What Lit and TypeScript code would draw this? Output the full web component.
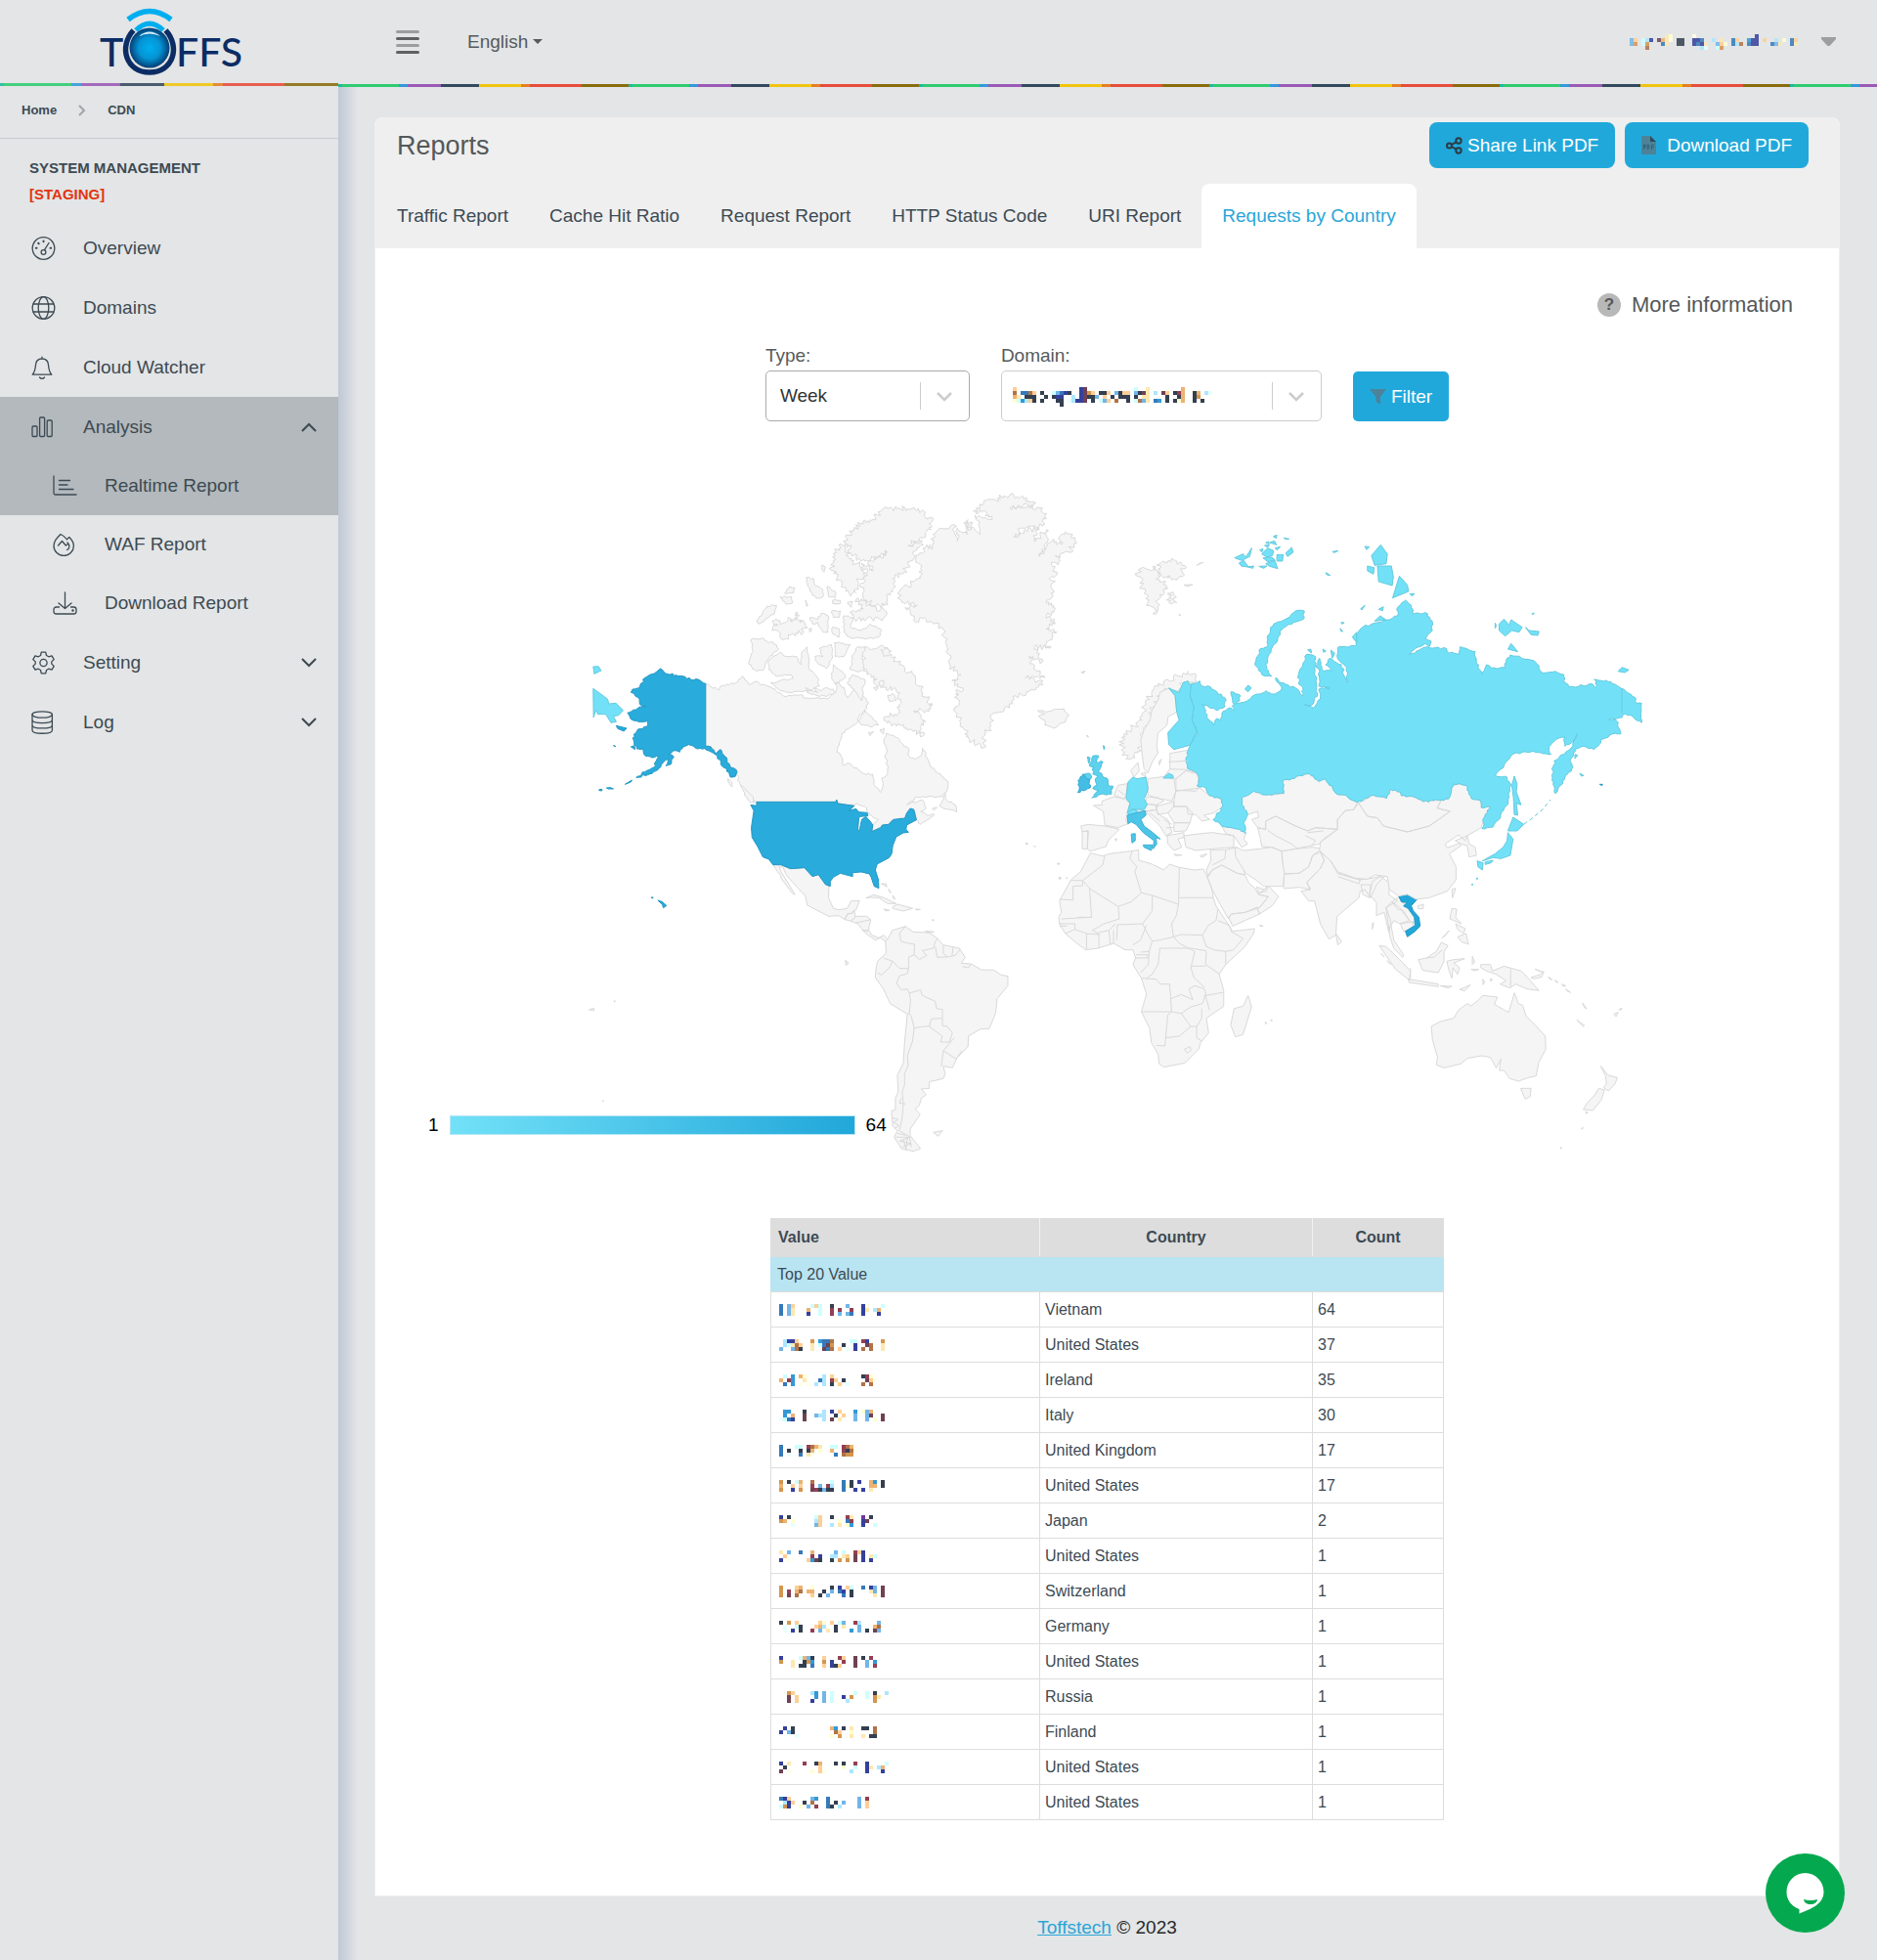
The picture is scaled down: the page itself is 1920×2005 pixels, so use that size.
import { LitElement, html, css, svg, nothing } from "lit";
import type { SVGTemplateResult } from "lit";
import { customElement, property, state } from "lit/decorators.js";
import { classMap } from "lit/directives/class-map.js";

/* ---------- Masked values: small colour mosaics ---------- */

const TONES: Record<string, string> = {
  n: "#35409c", b: "#3579b9", s: "#72b5e8", l: "#aee6ff", c: "#cdffff", h: "#e8ffff",
  w: "#933f53", m: "#6f4153", o: "#d3964f", t: "#edb272", p: "#ffcf96", y: "#ffe8b0",
  v: "#ffffd0", k: "#343f50", d: "#b07347", a: "#3399d6", e: "#ffffe8", u: "#6d3b9c",
};

@customElement("masked-value")
export class MaskedValue extends LitElement {
  @property({ attribute: false }) rows: string[] = [];

  static styles = css`
    :host { display: inline-flex; }
    svg { display: block; shape-rendering: crispEdges; }
  `;

  render() {
    const columns = Math.max(...this.rows.map((r) => r.length));
    const cells: SVGTemplateResult[] = [];
    this.rows.forEach((row, y) =>
      [...row].forEach((tone, x) => {
        if (TONES[tone]) cells.push(svg`<rect x=${x} y=${y} width="1" height="1" fill=${TONES[tone]}></rect>`);
      })
    );
    return html`<svg aria-hidden="true" width=${columns * 4} height=${this.rows.length * 4}
      viewBox="0 0 ${columns} ${this.rows.length}">${cells}</svg>`;
  }
}

/* ---------- World map ---------- */

interface Layer {
  frame: string;
  shapes: { tone: string; polys: string; rough?: number }[];
  borders?: string;
}

const AMERICAS: Layer = {
  frame: "translate(590 490) scale(.35714 .33333)",
  shapes: [
    { tone: "land", rough: 1, polys:
      "369,628 408,648 412,636 455,626 475,605 493,630 510,622 560,642 575,655 600,668 640,662 655,672 715,674 740,655 745,625 765,640 775,670 790,650 800,645 822,668 835,690 825,708 808,730 800,752 776,768 760,780 745,838 757,850 762,878 780,873 822,904 848,906 850,938 870,962 877,940 874,918 890,905 892,885 883,850 888,830 880,810 885,782 920,795 935,815 950,828 952,852 970,860 985,850 990,825 1005,860 1015,885 1050,915 1063,930 1060,960 1040,975 975,976 945,1000 990,985 1000,1010 985,1020 1000,1030 1025,1030 985,1060 973,1046 965,1014 955,1011 945,1025 940,1041 907,1045 893,1060 875,1062 870,1070 845,1082 848,1062 865,1045 850,1040 838,1030 825,1005 800,995 795,1003 748,996 744,984 742,991 515,991 490,978 465,930 457,893 440,885 425,852 412,830 400,842 384,822 369,820" },
    { tone: "land", rough: 2, polys:
      "770,178 795,155 820,130 845,128 870,100 895,90 930,95 940,88 970,95 990,95 1018,130 1015,155 985,180 948,205 990,190 970,220 950,262 935,290 905,305 905,345 890,365 880,390 850,390 820,360 815,320 830,290 815,260 850,280 835,255 870,240 890,225 865,235 830,250 800,240 775,220 785,210 770,195|" +
      "755,200 770,215 780,245 810,265 828,290 805,315 800,350 780,352 760,325 755,310 735,290 730,260 740,220|" +
      "782,410 820,400 800,370 815,368 830,390 880,402 880,425 830,430 790,428|" +
      "560,435 600,440 605,425 618,438 630,408 638,440 655,445 650,468 620,475 600,490 560,465 575,450|" +
      "825,515 890,518 900,545 930,570 970,610 1000,670 1018,695 1000,710 965,712 1000,745 985,750 990,790 960,770 920,750 890,750 880,730 920,720 930,685 915,650 880,640 850,640 860,615 830,600 815,570|" +
      "1222,52 1275,52 1308,70 1308,82 1240,90 1285,85 1320,85 1346,120 1335,145 1275,150 1252,178 1285,155 1325,155 1310,190 1345,155 1350,185 1325,238 1360,190 1390,200 1385,175 1410,168 1428,190 1410,225 1370,235 1385,250 1360,265 1375,285 1360,300 1365,340 1345,380 1370,400 1345,420 1370,440 1345,460 1375,470 1345,500 1355,520 1310,515 1335,560 1295,545 1320,590 1340,610 1285,610 1335,620 1310,648 1255,665 1240,702 1190,722 1185,760 1165,790 1165,825 1125,800 1110,770 1085,715 1095,690 1085,660 1105,640 1075,620 1100,600 1070,575 1060,515 1045,455 1000,430 965,435 940,395 975,388 930,378 925,345 965,315 985,305 988,265 970,250 1000,210 1020,207 1020,170 1080,140 1090,190 1090,150 1118,170 1108,135 1130,155 1120,125 1155,170 1140,110 1190,125 1175,105 1135,100 1165,75 1200,65" },
    { tone: "land", rough: 1, polys:
      "500,492 530,488 550,503 562,500 578,520 550,550 540,568 535,585 515,590 492,568 505,530|" +
      "548,560 580,532 600,545 630,545 642,570 645,530 660,515 665,580 690,610 695,635 665,650 640,652 600,655 570,640 555,625 620,612 615,602 570,605 550,585|" +
      "695,520 730,508 733,545 715,582 688,562 682,545 705,545|738,502 783,508 765,545 740,545|735,570 760,590 770,610 740,630 730,610|" +
      "805,515 825,515 818,545 825,590 800,590 783,585 790,540|790,600 825,615 815,680 800,655 775,625|808,740 825,710 865,755 840,760 815,755|" +
      "515,435 545,390 572,388 565,415 540,430 525,445|595,350 610,330 625,335 622,348|582,362 615,362 618,380 600,385|" +
      "657,303 678,305 680,322 705,340 705,362 685,365 668,345|717,330 740,345 740,365 720,360|733,372 755,372 755,382 733,382|" +
      "668,425 690,430 700,412 720,420 720,470 705,470 690,440 675,445|732,455 752,460 752,485 733,475|730,405 755,405 752,425 735,425|" +
      "765,420 790,425 785,455 815,465 840,445 870,460 870,480 850,490 785,488 765,470|702,264 712,270 708,286|655,372 662,388 657,390|" +
      "655,640 690,655 680,640 700,650 715,640 735,645 742,655 720,665 690,665 660,655|835,778 850,775 840,788|868,770 880,765 878,782|" +
      "870,525 890,520 898,538 880,545|890,665 905,658 915,680 895,682|865,625 878,618 876,640|665,460 672,458 668,470|775,380 790,376 786,394|" +
      "1040,1005 1055,965 1060,985 1085,1000 1088,1022 1070,1015|1018,1012 1032,1008 1024,1016|470,940 500,970 512,995 490,985|432,920 444,930 444,945|" +
      "1320,710 1345,715 1365,708 1395,705 1410,725 1400,745 1365,765 1340,755 1340,740 1322,728 1340,722" },
    { tone: "land", polys:
      "562,1184 585,1184 612,1196 652,1193 675,1220 692,1214 712,1244 722,1250 721,1285 735,1318 750,1322 775,1318 785,1295 810,1294 800,1322 792,1325 790,1332 775,1335 768,1352 750,1340 722,1342 660,1308 655,1280 620,1240 600,1215 590,1190 580,1190 585,1205 625,1275 618,1272 585,1225 585,1218 575,1205|" +
      "768,1352 775,1335 790,1332 795,1325 798,1345 785,1357|785,1357 800,1342 830,1342 842,1352 835,1385 820,1385 805,1365|818,1385 838,1387 845,1400 865,1408 880,1400 890,1412 885,1420 870,1408 855,1415 835,1400|" +
      "828,1286 850,1276 880,1285 915,1303 890,1303 865,1285 840,1284|905,1312 920,1305 962,1318 935,1326 905,1318|880,1320 896,1324 884,1325|970,1320 984,1321 974,1323|" +
      "872,1242 886,1242 888,1252|893,1258 900,1270 896,1268|905,1278 912,1290 906,1286|1018,1352 1023,1354 1019,1356|770,1478 777,1486 772,1491|" +
      "1448,595 1456,589 1450,597|1286,1116 1293,1120 1287,1122|1310,1126 1314,1128 1310,1128|1378,1180 1383,1181 1378,1183|1382,1222 1388,1226 1382,1228|1462,787 1466,792 1463,792" },
    { tone: "us", rough: 1, polys:
      "239,582 258,598 275,597 277,604 298,604 334,617 350,616 369,628 369,820 384,822 400,842 412,830 425,852 440,885 457,893 455,912 440,915 430,890 415,880 410,862 396,845 366,827 340,826 320,815 305,822 295,838 275,835 262,845 278,852 270,875 255,880 262,860 250,868 235,888 210,905 170,916 200,895 220,885 235,850 215,855 197,850 190,828 172,828 160,795 175,768 200,760 203,742 190,745 160,740 145,718 178,700 197,698 180,690 175,670 155,655 160,645 180,640 195,610 222,597" },
    { tone: "us", polys:
      "138,937 158,924 155,930|64,953 72,952 72,957 64,956|85,948 97,947 105,951 90,951|113,757 143,765 135,774 117,766|105,818 110,819 110,822|155,822 165,818 167,830|" +
      "232,1293 244,1297 257,1309 248,1316 245,1306|213,1284 219,1284 217,1287|" +
      "515,991 742,991 744,984 748,996 795,1003 780,1018 800,1012 808,1022 832,1024 834,1034 812,1036 808,1040 805,1078 810,1078 816,1045 828,1036 840,1050 848,1062 845,1082 870,1070 875,1062 893,1060 907,1045 940,1041 945,1025 955,1011 965,1014 973,1046 945,1062 943,1075 950,1084 935,1086 915,1098 905,1125 902,1150 895,1162 860,1182 855,1200 864,1230 865,1256 852,1250 843,1222 838,1212 815,1206 790,1208 790,1220 755,1210 735,1222 726,1235 726,1250 712,1244 692,1214 675,1220 652,1193 612,1196 585,1184 562,1184 550,1167 533,1160 518,1128 502,1100 500,1070 507,1018 498,1000 515,1003" },
    { tone: "low", polys: "47,643 88,675 92,690 112,688 133,710 120,725 105,728 113,745 98,748 83,722 60,722 55,708 48,732|47,576 62,575 70,588 50,598" },
    { tone: "uk", rough: 1, polys:
      "1478,850 1495,850 1488,868 1507,868 1495,895 1505,910 1522,925 1522,940 1535,942 1530,968 1500,968 1475,978 1495,955 1478,950 1490,940 1485,920 1493,912 1478,905 1480,885 1468,880 1475,865|1455,905 1470,904 1475,917 1465,923 1450,917|1462,853 1470,855 1466,873|1508,818 1512,822 1510,830" },
    { tone: "ireland", rough: 1, polys: "1450,905 1460,920 1470,922 1470,948 1435,962 1440,945 1436,925" },
  ],
  borders: "M800,1362L842,1352",
};

const SOUTH_AMERICA: Layer = {
  frame: "translate(420 880) scale(.40816 .33333)",
  shapes: [
    { tone: "land", polys:
      "1197,240 1207,215 1240,203 1260,220 1300,222 1320,240 1335,260 1375,270 1390,298 1380,316 1405,318 1430,336 1462,337 1480,352 1497,356 1497,385 1470,425 1466,470 1450,517 1428,518 1398,540 1397,572 1370,605 1358,637 1335,632 1340,655 1335,670 1300,680 1300,700 1280,702 1292,720 1280,730 1275,752 1265,764 1277,780 1252,825 1252,845 1278,885 1260,893 1230,885 1212,850 1220,830 1208,815 1205,770 1215,765 1215,730 1222,710 1220,660 1235,622 1238,560 1245,472 1202,440 1185,395 1165,360 1165,345 1170,310 1192,285 1190,250|" +
      "1310,835 1333,830 1322,847|1090,308 1098,316 1091,322|447,459 459,454 460,461|510,430 514,434 511,434|481,737 484,739 481,740|1290,217 1312,220 1296,222" },
  ],
  borders:
    "M1240,203L1225,225 1230,250 1263,258 1262,290 1248,298 1248,332 1225,332 1208,310 1185,300M1208,310L1200,330 1180,352 1170,345M1248,332L1245,348 1225,355 1218,378 1230,398 1245,395 1250,408 1278,398 1282,415 1315,433 1318,455 1333,458 1333,485 1305,487 1300,510 1285,510 1262,515 1255,480 1250,470 1253,430 1250,408M1300,510L1333,540 1328,558 1350,558 1358,530 1345,510 1333,508 1333,485M1262,515L1258,555 1245,600 1247,630 1238,655 1238,690 1232,710 1235,745 1232,790 1225,830 1250,848 1255,880M1362,545L1335,585 1330,632M1335,585L1368,610M1370,605l12,-20M1262,290L1275,305 1293,292 1283,277 1310,270 1315,250 1320,240M1315,265L1320,298 1345,297 1365,292 1378,272M1335,260L1335,285 1345,297M1360,265L1357,292M1245,472L1250,470M1405,318L1398,330 1383,326M1230,730L1225,745 1240,748M1208,790l14,6 -12,8 14,10 -12,10M1215,850L1252,850 1225,862 1255,870 1232,880M1220,838l20,6M1235,855l6,30M1245,852l-4,38",
};

const EURASIA: Layer = {
  frame: "translate(1060 530) scale(.40816 .33333)",
  shapes: [
    { tone: "land", rough: 2, polys:
      "240,735 225,740 215,700 218,665 240,645 265,620 275,570 290,530 320,500 355,485 380,470 400,490 388,510 380,500 368,505 358,535 332,522 310,535 305,560 290,590 285,620 270,650 265,700 255,720|" +
      "255,160 275,155 285,160 300,150 310,190 330,215 310,235 300,295 280,260 275,225 260,200|310,140 345,128 372,145 360,180 330,185 310,160|330,230 345,235 352,260 335,262" },
    { tone: "land", polys:
      "265,720 262,680 270,650 285,620 290,590 305,560 310,535 332,522 348,545 352,595 330,610 328,635 305,660 302,700 305,720 290,750 280,782 270,770|308,745 314,740 308,758|237,775 255,750 258,775 245,795|262,785 274,780 274,794|" +
      "402,145 418,136 410,138|370,205 392,204 380,210|113,473 121,470 115,476|127,666 129,670 127,670|358,294 362,298 359,300|" +
      "143,882 165,880 165,868 195,855 222,862 235,875 228,905 225,930 230,938 205,950 172,942 168,900|195,850 205,820 228,815 225,850 220,862|" +
      "112,945 130,940 172,945 208,955 180,990 175,1008 135,1022 128,1015 130,960 115,962|115,962 130,960 128,1015 115,1015|197,985 202,984 200,991|" +
      "280,800 320,793 345,800 350,840 340,868 305,860 280,850|275,855 305,858 320,868 300,882 275,875|300,885 345,870 345,885 330,905 305,910|240,893 270,893 278,878 305,880 300,895 275,900|" +
      "275,900 300,895 310,912 330,925 340,965 325,975 310,945 285,915|330,905 345,885 375,885 392,905 385,935 345,935|345,935 385,935 375,960 345,962|328,975 370,965 370,980 355,985 365,1010 345,1020 330,1000|" +
      "335,722 380,712 380,745 400,780 375,775 350,800 320,793 335,770|350,800 375,775 403,785 410,822 400,838 350,835|345,868 350,838 410,828 435,852 465,862 468,885 445,905 420,912 435,925 415,930 400,910 380,908 378,885 345,885|" +
      "370,975 400,970 440,965 470,970 495,975 495,1010 440,1015 400,1020 375,1010|465,945 510,955 525,968 520,985 530,1000 515,1010 495,975 475,968|345,1032 365,1034 350,1036|410,1037 428,1030 418,1041|" +
      "515,880 515,860 545,838 565,848 590,850 620,845 618,805 640,800 660,790 685,785 708,808 725,800 755,848 775,850 785,862 805,872 795,895 775,897 755,925 755,955 700,950 680,960 650,945 600,915 575,930 575,955 555,950 540,925 557,918 555,900 530,910|" +
      "555,950 575,955 575,930 600,915 650,945 680,960 700,950 755,955 720,985 710,1000 650,1015 615,1022 590,1010 565,1008 562,985|" +
      "808,875 830,915 855,920 870,945 930,963 985,945 1037,900 1005,890 1015,865 1033,862 1045,815 1078,820 1090,860 1112,865 1115,888 1138,885 1125,910 1115,950 1080,975 1075,990 1058,972 1025,1000 1030,1012 1060,998 1065,1005 1035,1030 1052,1070 1052,1110 1030,1145 985,1165 952,1170 930,1155 908,1160 885,1140 880,1100 850,1095 830,1108 800,1105 755,1085 740,1055 710,1020 712,995 755,955 755,925 775,897 795,895|" +
      "808,875 845,850 878,860 888,832 912,840 915,852 945,855 970,870 1015,865 1005,890 1037,900 985,945 930,963 870,945 855,920 830,915|" +
      "1050,990 1080,975 1085,1000 1100,1010 1103,1035 1085,1040 1080,1005 1065,1000|498,1010 520,1020 560,1015 590,1010 615,1022 617,1055 622,1090 618,1130 570,1130 550,1110 525,1090 500,1040" },
    { tone: "low", rough: 1, polys:
      "388,510 400,507 410,500 415,515 430,515 473,552 473,578 455,590 415,572 425,590 428,615 445,635 452,615 462,620 465,600 485,582 495,590 492,565 488,533 512,545 510,560 500,570 520,565 540,548 560,540 575,530 590,540 605,535 615,525 600,490 612,505 655,525 668,545 668,520 658,510 658,475 668,450 678,418 700,425 698,460 705,540 690,575 672,573 695,583 712,548 708,525 735,520 733,525 708,515 710,470 703,460 710,430 720,470 740,468 725,450 735,430 765,450 770,480 780,505 778,460 755,430 755,398 803,390 800,360 820,333 860,320 885,312 905,300 905,275 925,252 940,268 945,295 975,290 992,315 993,345 975,370 990,378 985,395 975,385 950,400 935,420 960,405 980,395 1000,398 1028,400 1030,410 1060,418 1062,395 1078,400 1085,405 1100,410 1103,445 1117,478 1128,450 1140,460 1175,460 1178,435 1188,420 1248,438 1270,475 1300,470 1322,480 1325,505 1335,518 1395,510 1400,520 1405,515 1398,495 1440,502 1467,523 1503,555 1505,568 1517,568 1517,628 1490,605 1475,600 1468,612 1435,618 1455,622 1465,662 1445,662 1420,678 1398,710 1370,700 1350,710 1338,745 1345,765 1325,795 1315,820 1300,845 1292,790 1298,745 1345,700 1355,662 1350,680 1325,700 1325,672 1310,675 1290,695 1285,712 1290,725 1245,715 1198,722 1150,790 1180,795 1190,820 1183,870 1160,925 1145,948 1117,953 1125,910 1138,885 1115,888 1112,865 1090,860 1078,820 1045,815 1040,840 1033,862 1015,865 970,870 945,855 915,852 912,840 888,832 878,860 845,850 805,872 785,862 775,850 755,848 725,800 708,808 685,785 660,790 640,800 618,805 620,845 590,850 565,848 545,838 515,860 515,880 530,910 520,935 525,968 510,955 465,945 443,925 468,885 465,862 435,852 425,828 403,822 408,800 400,780 380,770 375,745 380,715 385,700 403,655 390,620 395,580 385,545|" +
      "548,450 562,400 580,395 580,360 595,325 625,310 655,283 672,285 670,310 645,320 612,345 605,375 590,400 580,430 575,450 590,485 565,480" },
    { tone: "low", polys:
      "840,115 863,82 880,110 877,140 848,145|855,147 890,147 895,180 892,207 858,195|830,147 847,152 845,172 830,162|910,178 930,205 933,225 893,245|823,87 835,88 828,97|936,232 948,232 942,240|" +
      "1160,325 1172,310 1185,328 1190,312 1218,335 1210,350 1192,345 1175,362 1160,345|1226,335 1235,345 1260,348 1257,360 1240,358|1182,402 1190,385 1207,410|1150,322 1153,330 1150,338|1242,294 1248,291 1245,296|1458,470 1468,458 1485,466 1475,474|" +
      "497,122 518,110 525,120 540,92 535,118 515,130|508,138 520,130 532,150 515,148|565,110 580,92 595,100 592,115 578,120|603,112 619,112 617,132 603,132|625,108 640,90 644,105 630,118|575,140 598,130 605,155 585,148|585,75 597,70 602,82|594,56 603,52 601,62|620,61 634,64 626,65|558,148 578,147 570,154|530,150 545,147 543,154|572,84 584,82 580,90|598,92 612,88 604,98|568,122 590,120 598,128 580,134|575,76 582,72 584,79|560,98 568,94 566,104|" +
      "742,103 757,100 747,106|726,167 737,176 728,174|813,278 824,268 816,282|858,280 870,272 868,284|848,316 862,300 876,312|764,320 772,321 766,325|762,338 768,348 764,348|792,365 803,350 803,382|" +
      "523,525 531,513 539,521 531,533|680,405 688,402 690,414|738,405 748,415 742,430|718,402 726,408 720,412|1198,792 1205,815 1203,840 1215,880 1203,875 1207,912 1198,910 1196,860 1192,820|318,798 332,783 343,790 343,798|1350,725 1357,728 1350,738|1362,783 1372,790 1366,792|" +
      "1195,918 1222,940 1205,960 1182,960|1182,965 1195,985 1188,1035 1165,1045 1145,1042 1118,1052 1150,1030 1170,1010 1180,990|1105,1052 1120,1058 1118,1080 1107,1070|1125,1055 1145,1050 1140,1058 1125,1063|1104,1104 1107,1106 1104,1109|1092,1123 1095,1124 1092,1127|" +
      "332,522 358,535 368,505 380,500 388,515 385,545 395,580 390,620 403,655 385,697 345,710 332,695 330,658 358,620 352,595 348,545|242,795 252,800 275,795 280,830 275,850 270,860 278,880 270,895 240,893 228,905 235,875 225,860 230,810|228,905 240,893 252,897 255,908 235,910" },
    { tone: "us", polys: "1412,817 1419,817 1418,821" },
    { tone: "italy", polys: "228,912 255,903 273,898 275,912 262,925 270,945 295,968 311,985 300,980 302,1000 293,1015 295,990 268,965 250,940 238,932 230,938|268,1003 292,1003 288,1020 270,1010|238,970 248,968 248,990 240,997" },
  ],
  borders: "M332,748L380,745M335,770L378,772M580,958L600,975 640,1000 655,1015M680,965L720,960M675,975L700,990 690,1005M205,835L222,850M285,905L310,930M320,925L340,940M325,950H345M340,965L328,975",
};

const SOUTH: Layer = {
  frame: "translate(1060 830) scale(.39542 .33333)",
  shapes: [
    { tone: "land", polys:
      "140,128 172,137 190,130 245,122 265,118 265,150 300,162 330,180 345,162 370,172 410,180 432,177 440,195 455,240 458,265 465,290 490,335 508,368 565,360 562,375 540,415 490,470 473,500 485,550 485,598 440,635 446,680 425,710 420,730 385,772 330,785 318,775 315,745 298,710 293,665 272,615 285,560 272,512 250,470 257,450 250,425 230,425 200,405 160,420 128,425 100,400 75,375 60,345 58,325 65,310 60,275 90,210 115,185|" +
      "548,565 557,600 535,685 515,692 503,655 512,605 535,598|592,647 597,650 593,652|606,640 611,642 607,643|578,349 587,352 580,353|55,159 61,160 56,162|58,203 64,204 59,207|78,203 81,205 78,206|" +
      "450,118 490,118 520,110 530,130 540,195 520,190 480,165 455,180 445,200 440,180 452,150|442,200 455,180 480,165 520,190 540,195 550,220 565,235 575,255 600,262 578,295 540,310 505,315 497,330 478,290 455,240|497,325 505,315 540,310 570,295 578,315 540,335 508,352|578,295 600,262 575,255 590,240 600,228 627,262 610,290 578,315 570,295|570,232 590,240 600,228 595,245 575,250|" +
      "635,122 670,115 715,110 740,115 715,135 705,170 680,190 640,192|640,192 680,190 705,170 715,135 735,125 745,150 735,175 700,218 710,240 680,233 640,237|" +
      "735,125 760,150 780,190 835,210 870,205 905,195 880,225 865,265 850,240 838,245 835,265 778,322 775,380 757,392 735,345 720,275 705,275 685,245 708,240 700,218 735,175 745,150|775,375 790,400 780,410|840,225 865,225 862,265 845,255|" +
      "870,215 890,200 915,220 912,255 935,275 905,295 918,340 912,370 900,310 880,320 880,280 862,255|905,295 920,278 940,295 965,335 940,345 925,335 918,350 925,395 950,440 948,448 925,420 915,385 910,340|920,278 938,262 945,278 960,290 985,330 975,345 965,335 950,305 935,300|942,345 975,338 975,360 950,368|" +
      "987,290 1002,285 1000,299 988,299|1075,240 1085,236 1077,265|870,342 873,344 869,362|1075,298 1088,300 1085,325 1100,345 1070,330|1085,345 1110,360 1105,375 1090,362|1090,385 1112,375 1118,408 1100,400|1050,388 1068,366 1056,384|" +
      "887,412 905,415 940,455 968,490 965,518 930,485|962,515 990,520 1040,530 1040,538 965,525|1045,535 1075,537 1065,542|1095,547 1123,533 1108,551|892,436 900,446 895,442|908,458 918,470 911,464|" +
      "988,455 1010,450 1035,430 1048,402 1065,412 1055,430 1055,460 1040,495 1000,488|1062,460 1080,455 1108,452 1080,465 1095,480 1090,500 1078,480 1075,512 1068,490|1128,445 1134,462 1128,470|1125,485 1145,485 1136,489|1155,515 1160,522 1156,532|1175,513 1180,516 1176,522|" +
      "1150,470 1175,470 1180,490 1210,475 1255,490 1275,515 1300,550 1270,545 1240,530 1225,542 1200,530 1215,520 1190,500 1165,490 1150,480|1280,510 1305,500 1313,490 1308,508 1288,514|1290,484 1312,494 1300,490|1325,508 1335,517 1328,514|1342,518 1350,525 1344,523|1360,530 1370,536 1362,536|1370,545 1382,556 1374,552|" +
      "1237,557 1247,590 1258,595 1267,628 1290,655 1317,690 1318,730 1300,770 1293,812 1270,818 1248,828 1225,820 1210,795 1198,795 1202,760 1190,788 1175,755 1153,750 1115,758 1098,775 1055,787 1035,778 1038,755 1025,700 1022,660 1045,645 1080,635 1092,610 1115,590 1125,597 1143,580 1155,565 1193,570 1185,592 1222,617|1253,850 1280,850 1278,875 1265,883|" +
      "1460,782 1480,810 1503,817 1498,835 1480,858 1468,848 1475,835 1473,812|1455,850 1470,855 1462,885 1440,918 1415,915 1425,895 1445,870|1421,922 1427,924 1424,928|1410,974 1415,970 1412,976|1357,1030 1359,1034 1357,1035|1398,640 1418,657 1415,660|1413,588 1424,606 1418,602|1494,622 1505,617 1500,630|1507,608 1515,604 1512,610" },
    { tone: "high", polys: "938,262 963,252 985,270 970,290 975,305 990,325 993,352 980,368 960,385 955,368 980,350 978,325 962,298 950,290 960,280 945,278" },
  ],
  borders:
    "M120,212L172,165 177,137M60,270L95,272 95,230 120,228 120,212 88,212M120,212L138,237 212,292 245,278 272,250 255,185 260,170 242,145 248,122M138,237L143,325 65,330M143,325H108M212,292L215,330 175,345 145,365M272,250L300,258 368,285 370,172M370,265H458M368,285L362,320 350,345 355,385 375,378 430,380 445,350 465,335 470,300M300,258L300,305 275,345 210,348 208,395M275,345L290,380 300,398 320,395 355,385M285,350L270,395 250,410M300,398L292,430 270,432M320,420L400,420 440,428M355,385L370,405 410,430M430,380L440,415 460,425 490,430 510,425 535,390 505,370 500,350 470,335M490,430V470M410,430L400,480 408,510 435,540M440,430L438,470 475,500M400,475H438M272,512L310,515 320,530 345,530 348,575 350,615 272,615M348,575L375,562 405,578 395,545 410,535 435,545 440,565 485,555M350,615L375,620 400,600 430,590 437,562 448,610M375,620L400,660 415,660 428,635 428,605M350,615L340,625 333,720 310,718M333,695L370,690 400,660M415,660V695L428,705M320,420L315,470 300,500 285,512M292,430L290,470 270,495M258,450H288V440H258M383,730l15,-8 2,12 -10,8zM75,375L100,362 130,375V425M130,375L162,378V420M160,372L188,365 192,410M100,362V345L60,345M60,352H80M145,365L165,378M188,365L205,345M200,365V405M490,118L488,145 455,165M778,190L838,210 835,222 780,200M1010,450L1030,447 1050,425M1227,485V540M968,480V515",
};

/** Adds small deterministic indents along each edge of a polygon. */
function coastline(polys: string, rough = 0): string {
  return polys.split("|").map((poly, p) => {
    const pts = poly.trim().split(" ").map((pair) => pair.split(",").map(Number));
    let seed = 17 + p * 31;
    const rnd = () => ((seed = (seed * 1103515245 + 12345) % 2147483648) / 2147483648);
    const out: string[] = [];
    pts.forEach(([x, y], i) => {
      out.push(`${x},${y}`);
      const [nx, ny] = pts[(i + 1) % pts.length];
      const len = Math.hypot(nx - x, ny - y);
      if (!rough || len < 12 || len > 90) return;
      const steps = Math.min(8, Math.floor(len / (rough === 2 ? 4 : 6)));
      for (let s = 1; s < steps; s++) {
        const t = s / steps;
        const d = (rnd() - 0.5) * (rough === 2 ? 18 : 6);
        out.push(`${(x + (nx - x) * t + ((ny - y) / len) * d).toFixed(1)},${(y + (ny - y) * t - ((nx - x) / len) * d).toFixed(1)}`);
      }
    });
    return `M${out.join("L")}Z`;
  }).join("");
}

@customElement("geo-chart")
export class GeoChart extends LitElement {
  static styles = css`
    :host { display: block; position: relative; }
    svg { display: block; width: 100%; height: auto; }
    path { stroke-width: 1; stroke-linejoin: round; vector-effect: non-scaling-stroke; }
    .land { fill: #f5f5f5; stroke: #d9d9d9; }
    .low { fill: #72e1f8; stroke: #66cade; }
    .uk { fill: #5dd2ee; stroke: #4cbfdc; }
    .italy { fill: #4cc5e8; stroke: #3db0d3; }
    .ireland { fill: #43bde5; stroke: #35a8cf; }
    .us { fill: #29abdb; stroke: #2599c5; }
    .high { fill: #21a7da; stroke: #1e96c4; }
    .border { fill: none; stroke: #d9d9d9; }
    .islands { fill: none; stroke: #66cade; stroke-dasharray: 4 3; }
    .legend { position: absolute; left: 54px; bottom: 37px; display: flex; align-items: center; gap: 11px; font-size: 19px; line-height: 24px; color: #000; }
    .scale { width: 415px; height: 20px; box-sizing: border-box; border: 1px solid #b8e6f4; background: linear-gradient(90deg, #72e1f8, #21a7da); }
  `;

  render() {
    return html`
      <svg viewBox="384 480 1497 720" role="img" aria-label="Requests by Country">
        ${[AMERICAS, SOUTH_AMERICA, SOUTH, EURASIA].map((layer) => svg`
          <g transform=${layer.frame}>
            ${layer.shapes.map((s) => svg`<path class=${s.tone} d=${coastline(s.polys, s.rough)}></path>`)}
            ${layer.borders ? svg`<path class="border" d=${layer.borders}></path>` : nothing}
          </g>`)}
        <path class="islands" d="M1559,843L1566,838 1577,829 1586,818"></path>
        <path class="low" d="M1659,704V730"></path>
      </svg>
      <div class="legend"><span>1</span><span class="scale"></span><span>64</span></div>
    `;
  }
}

/* ---------- Icons ---------- */

const ICONS: Record<string, SVGTemplateResult> = {
  gauge: svg`<circle cx="12.5" cy="12" r="11.3"/><circle cx="12.5" cy="16" r="2.4"/><path d="M13.5 13.6 18 6.500"/><path d="M12.5 4.600v.6M7.2 6.800l.5.5M4.800 11.800h.7M19.500 11.800h.7" stroke-width="2"/>`,
  globe: svg`<circle cx="12.5" cy="12" r="11.3"/><ellipse cx="12.5" cy="12" rx="5.3" ry="11.3"/><path d="M2.200 8h20.600M2.200 16h20.600"/>`,
  bell: svg`<path d="M11 1.200V3M1.200 19.200h19.600c-2.500-3-3-5-3.300-10C17.200 5 14.500 3 11 3S4.800 5 4.500 9.200c-.3 5-.8 7-3.300 10zM8.500 22c1.300 1.700 3.700 1.700 5 0"/>`,
  bars: svg`<rect x="1" y="11" width="5" height="10.5" rx="1"/><rect x="8.6" y="2" width="5" height="19.5" rx="1"/><rect x="16.2" y="5" width="5" height="16.5" rx="1"/>`,
  lines: svg`<path d="M1 2v17.500c0 1 .5 1.500 1.500 1.500H24M6.500 6.500h11M6.500 11h8.500M6.500 15.500H21"/>`,
  flame: svg`<path d="M8 1.500c-4 4-7 7-7 12A10.200 10.200 0 0 0 11.200 23.500 10.200 10.200 0 0 0 21.400 13.500c0-4-2-6.500-4.600-9-1 .8-1.500 1.300-2.200 2.400C12.500 4.500 10.500 2.500 8 1.500zM5.500 13l4-4.500 3.800 4.500 2.200-1.500M15 10c2.500 2.500 2.500 6.500-.5 7.500"/>`,
  download: svg`<path d="M12.500 1v16.500M6 12l6.500 5.500L19 12M6.500 16H3.500C2 16 1 17 1 18.500v2C1 22 2 23 3.500 23h18c1.500 0 2.500-1 2.500-2.500v-2c0-1.500-1-2.500-2.500-2.500h-3"/><circle cx="20.5" cy="19.5" r=".6"/>`,
  gear: svg`<path d="M10.300 1.200h4.400l.8 3.300 2.300 1.300 3.200-1 2.200 3.800-2.400 2.300v2.200l2.400 2.300-2.200 3.800-3.200-1-2.300 1.300-.8 3.300h-4.400l-.8-3.300-2.300-1.300-3.200 1-2.200-3.800 2.400-2.300v-2.200L1.800 8.600 4 4.800l3.200 1 2.300-1.300z"/><circle cx="12.5" cy="12" r="3.6"/>`,
  database: svg`<ellipse cx="11.2" cy="4" rx="10.2" ry="3.2"/><path d="M1 4v16c0 4.300 20.400 4.300 20.400 0V4M1 9.300c0 4.300 20.400 4.300 20.400 0M1 14.700c0 4.300 20.400 4.300 20.400 0"/>`,
};

interface MenuItem { icon: string; label: string; sub?: boolean; active?: boolean; chevron?: "up" | "down" }

const MENU: MenuItem[] = [
  { icon: "gauge", label: "Overview" },
  { icon: "globe", label: "Domains" },
  { icon: "bell", label: "Cloud Watcher" },
  { icon: "bars", label: "Analysis", active: true, chevron: "up" },
  { icon: "lines", label: "Realtime Report", sub: true, active: true },
  { icon: "flame", label: "WAF Report", sub: true },
  { icon: "download", label: "Download Report", sub: true },
  { icon: "gear", label: "Setting", chevron: "down" },
  { icon: "database", label: "Log", chevron: "down" },
];

const TABS = ["Traffic Report", "Cache Hit Ratio", "Request Report", "HTTP Status Code", "URI Report", "Requests by Country"];

const ROWS: { mask: string[]; country: string; count: number }[] = [
  { country: "Vietnam", count: 64, mask: ["b.sp....cpc..k...s...ne...c", "b.sy...t..c..w.w..w..ny.lt", "b.sy...n..c..w.s.sb..n...n"] },
  { country: "United States", count: 37, mask: [".lnnp...o.abbd....cc.wn...o", ".lcydp..y.cbmo..k..n..md..y", "s..sdk..y..mbd.p.h.n.d.d..y"] },
  { country: "Ireland", count: 35, mask: [".c.a.tv....l.p.......kwv", "t.wa..y...bl.wp.k.....mpe", ".b.a.e.e.l.l.k.p.h...d.d"] },
  { country: "Italy", count: 30, mask: [".aa...k....l.n.p...a.vst", ".a.t..m..sll..k.p..s..sm..m", "hcbn..m....l.m.y...s..s.v.m"] },
  { country: "United Kingdom", count: 17, mask: ["b...cc.wdty..cc.wdt", "b.k..k.kt.v..t..wkde", "b.h..b.ye.....b.doo"] },
  { country: "United States", count: 17, mask: ["o.k.ct..d....c..b.k.n..ta.k", "t..p.p..w.s.wl..bvk....tt.k", "o..n.o..mwkskk..b..n.n.y"] },
  { country: "Japan", count: 2, mask: ["n.k......cp..k...wy..u.k", "ot.v.....lp....v.bw..nm", "...h.....sp..l.y.va..n..c"] },
  { country: "United States", count: 1, mask: ["y.s..b..t.....s.c..wpn", ".p......w.n..ll.yp.m.n.yc", "n.e....pamk..k.o.o.m.n.n"] },
  { country: "Switzerland", count: 1, mask: ["o...pt..v....k.n.pc..b.ns.m", "o.w.td.tt..k.s.bn.k....ys.m", "o.m.d...p.k.s...b.k.....y.m"] },
  { country: "Germany", count: 1, mask: ["k.o.p.....pv.p.cs..wl....s", ".h..ck...ptl..k.y...s...td", ".h.n.k..w.s.y.k...a.s.k.ms"] },
  { country: "United States", count: 1, mask: ["n....ctsk..p...wp..m.k.w", "o..y..koa..o.n..w..m..s.a", "...y.kk.b..p.nkp...m..s.w"] },
  { country: "Russia", count: 1, mask: ["..op....la.s.c.....c..c.k..l", "..m.p....a.s.c..n.o...c.oy", "..m.p...n..s.c...l......o"] },
  { country: "Finland", count: 1, mask: [".n.k.........ta.k.y..kk.d", "n.sk..........dp..v.....d", "....h........v.o..y..y.kk"] },
  { country: "United States", count: 1, mask: ["n.y...w..kt...k.k..w..n....c", ".k........p.....v..c..ny.lt", "m.e.....v.pe......l...n...n"] },
  { country: "United States", count: 1, mask: ["bnp.....sa..b.......s.w", ".lnp..k.d...b.k.s...s.p", "con..v.s.w..bk.l....s.p"] },
];

const USER_MASK = [
  ".........yv.....e...............n",
  "sp.cln.mtye.kk..nnb..l.y..bp..ann.p..l.v.bp",
  "so.co...by..kk..nbny..spv.bld.bnn...bsy..by",
  "....d.............lh..co",
];

const DOMAIN_MASK = [
  "p................nm............c..y........t",
  "d.bbdp.k..csbnk..nmop.kkp.skpp.skmy.l.mp.kwt..kt.lh",
  "ty.kkk..k.knn..l.nmkks.p.k.kkk.k.yy....k..kt..ko",
  "vcalpk.k...kk.hlnnm.k.csp.d..k.cdsy.ba.k.kvt..k.k",
  "............k",
];

const icon = (name: string) => html`
  <svg class="icon" width="25" height="24" viewBox="0 0 25 24" aria-hidden="true">${ICONS[name]}</svg>`;

const chevron = (dir: string) => html`
  <svg class="chevron" width="16" height="10" viewBox="0 0 16 10" aria-hidden="true">
    <path d=${dir === "up" ? "M1 9 8 2l7 7" : "M1 1l7 7 7-7"}></path>
  </svg>`;

@customElement("app-root")
export class AppRoot extends LitElement {
  @state() private tab = 5;

  static styles = css`
    :host { display: block; font-family: "Liberation Sans", Arial, sans-serif; font-size: 19px; line-height: 24px; color: #3d4a53; background: #e3e5e6; }
    * { box-sizing: border-box; }
    a { color: inherit; text-decoration: none; }
    button { font: inherit; color: inherit; border: 0; padding: 0; background: none; cursor: pointer; }
    .app { display: flex; min-height: 100vh; }
    .stripe { height: 3px; background-image: linear-gradient(90deg, #1abc9c 1.2%, #2ecc71 1.2% 21%, #3498db 21% 24%, #9b59b6 24% 35.5%, #34495e 35.5% 48.5%, #f1c40f 48.5% 63%, #e67e22 63% 66%, #e74c3c 66% 84%, #8a6d0b 84%); }

    aside { flex: none; width: 346px; background: #e3e5e6; }
    aside .stripe { opacity: 0.88; }
    .brand { display: flex; justify-content: center; height: 85px; padding: 9px 0 0; }
    .brand svg { overflow: visible; }
    .logo { font-family: "Lato", sans-serif; font-size: 41px; font-weight: 500; fill: #0c2c64; }
    .crumbs { display: flex; align-items: center; gap: 22px; height: 54px; padding: 0 22px 3px; border-bottom: 1px solid #c8ccce; font-size: 13px; font-weight: bold; }
    .crumbs svg { fill: none; stroke: #a0a5a8; stroke-width: 2; }
    .section { padding: 16px 30px 11px; font-size: 15px; font-weight: bold; line-height: 27px; }
    .section div { color: #e13410; }
    .item { display: flex; align-items: center; height: 61px; padding: 0 22px 0 32px; }
    .item.sub { height: 60px; padding-left: 54px; }
    .item.active { background: #b3b9bc; }
    .icon { flex: none; margin-right: 28px; fill: none; stroke: #3d4a53; stroke-width: 1.3; stroke-linejoin: round; stroke-linecap: round; }
    .label { flex: 1; }
    .chevron { fill: none; stroke: #3d4a53; stroke-width: 2; }

    .page { flex: 1; min-width: 0; display: flex; flex-direction: column; }
    .topbar { display: flex; align-items: center; height: 86px; padding: 0 42px 0 59px; color: #565a5c; }
    .page > .stripe { flex: none; background-size: 297px 3px; }
    .burger { display: flex; flex-direction: column; gap: 4px; width: 24px; margin-right: 49px; }
    .burger i { height: 3px; border-radius: 2px; background: #9d9d9d; }
    .burger i:nth-child(even) { background: #606060; }
    .caret { display: inline-block; margin-left: 5px; vertical-align: 4px; border: 5px solid transparent; border-top-color: #565a5c; border-bottom: 0; }
    .user { display: flex; align-items: center; gap: 24px; margin-left: auto; }
    .user masked-value { opacity: 0.85; }

    main { flex: 1; display: flex; flex-direction: column; padding: 31px 38px 0 37px; background: linear-gradient(90deg, #bfc8d6, #e3e5e600 20px); }
    .card { flex: 1; border: 1px solid #efefef; border-top: 0; border-radius: 8px 8px 0 0; background: #fff; overflow: hidden; }
    .card-head { display: flex; align-items: center; height: 68px; padding: 0 31px 11px 22px; background: #efefef; }
    h1 { flex: 1; margin: 0; font-size: 27px; font-weight: normal; line-height: 32px; color: #54585a; }
    .primary { display: flex; align-items: center; height: 47px; padding: 0 17px; border-radius: 8px; background: #21a8db; color: #fff; }
    .primary + .primary { margin-left: 10px; }
    .share { gap: 5px; }
    .download { gap: 11px; }
    .tabs { display: flex; padding-left: 1px; background: #efefef; }
    .tab { height: 66px; padding: 0 21px 1px; border-radius: 8px 8px 0 0; white-space: nowrap; }
    .tab.on { background: #fff; color: #2aa6d8; }

    .body { padding: 45px 0 77px; }
    .more { display: flex; align-items: center; justify-content: flex-end; gap: 11px; padding-right: 47px; font-size: 22px; line-height: 26px; color: #54585a; }
    .help { width: 24px; border-radius: 12px; background: #b8b8b8; font-size: 17px; font-weight: bold; line-height: 24px; text-align: center; }
    form { display: flex; justify-content: center; align-items: flex-end; gap: 32px; margin: 27px 0 49px; }
    .field { display: grid; gap: 3px; color: #565a5c; }
    .select { display: grid; align-items: center; height: 52px; }
    .select > * { grid-area: 1 / 1; }
    .select svg { justify-self: end; pointer-events: none; }
    .select masked-value { margin: 2px 0 0 12px; pointer-events: none; }
    select { width: 100%; height: 52px; padding: 0 56px 0 14px; border: 1px solid #ccc; border-radius: 5px; appearance: none; background: #fff; font: inherit; color: #333; }
    .type { width: 209px; }
    .type select { border-color: #aaa; }
    .domain { width: 328px; }
    .filter { height: 51px; gap: 5px; border-radius: 5px; }

    table { width: 689px; margin: 46px auto 0; border-collapse: collapse; table-layout: fixed; font-size: 16px; }
    th, td { padding: 0 5px; border: 1px solid #ddd; line-height: 35px; text-align: left; }
    th { background: #ddd; border-right-color: #f2f2f2; line-height: 38px; text-align: center; padding: 0 7px; }
    th:first-child { text-align: left; width: 275px; }
    th:nth-child(2) { width: 279px; }
    th:last-child { border-right-color: #ddd; }
    .top td { padding: 0 6px; background: #b9e4f2; border-color: #b9e4f2; border-bottom-color: #ddd; }
    td masked-value { display: flex; margin-left: 3px; }

    footer { height: 66px; padding-top: 20px; text-align: center; color: #26292b; }
    footer a { color: #2aa6d8; text-decoration: underline; }
    .chat { position: absolute; right: 33px; top: 1896px; width: 81px; height: 81px; }
    .chat svg { display: block; }
  `;

  render() {
    return html`
      <div class="app">
        <aside>
          <div class="brand">${this.logo()}</div>
          <div class="stripe"></div>
          <nav class="crumbs" aria-label="Breadcrumb">
            <a href="#home">Home</a>
            <svg width="8" height="12" viewBox="0 0 8 12" aria-hidden="true"><path d="M1 1l5 5-5 5"></path></svg>
            <a href="#cdn">CDN</a>
          </nav>
          <div class="section">SYSTEM MANAGEMENT<div>[STAGING]</div></div>
          <nav aria-label="Main">
            ${MENU.map((m) => html`
              <a href="#" class=${classMap({ item: true, sub: !!m.sub, active: !!m.active })}>
                ${icon(m.icon)}<span class="label">${m.label}</span>${m.chevron ? chevron(m.chevron) : nothing}
              </a>`)}
          </nav>
        </aside>
        <div class="page">
          <header class="topbar">
            <button class="burger" aria-label="Menu"><i></i><i></i><i></i><i></i></button>
            <button>English<span class="caret"></span></button>
            <button class="user" aria-label="Account">
              <masked-value .rows=${USER_MASK}></masked-value>
              <svg width="15" height="10" viewBox="0 0 15 10" aria-hidden="true"><path d="M0 0h15v2L8.500 9h-2L0 2z" fill="#9d9f9f"></path></svg>
            </button>
          </header>
          <div class="stripe"></div>
          <main>
            <section class="card">
              <div class="card-head">
                <h1>Reports</h1>
                <button class="primary share">
                  <svg width="17" height="18" viewBox="0 0 17 18" fill="none" stroke="#2d3b42" stroke-width="2" aria-hidden="true">
                    <circle cx="3.5" cy="9" r="2.5"></circle><circle cx="13" cy="4" r="2.7"></circle><circle cx="13" cy="14" r="2.7"></circle>
                    <path d="M5.800 8 10.500 5.300M5.800 10l4.700 2.700"></path>
                  </svg>Share Link PDF
                </button>
                <button class="primary download">
                  <svg width="15" height="19" viewBox="0 0 15 19" aria-hidden="true">
                    <path d="M1.500 0H9l6 6v11.500c0 1-.5 1.500-1.500 1.500h-12C.5 19 0 18.500 0 17.500v-16C0 .5.5 0 1.500 0z" fill="#4d8299"></path>
                    <path d="M9 0l6 6H9z" fill="#2d4c5a"></path>
                    <path d="M2.500 14V9h1.500v2.500H2.500M6.200 9v4.500h.8l1-1v-2.500l-1-1zM10.500 14V9.200H13M10.500 11.500H13" fill="none" stroke="#2f6378"></path>
                  </svg>
                  Download PDF
                </button>
              </div>
              <div class="tabs" role="tablist">
                ${TABS.map((t, i) => html`
                  <button role="tab" aria-selected=${i === this.tab} class=${classMap({ tab: true, on: i === this.tab })}
                    @click=${() => (this.tab = i)}>${t}</button>`)}
              </div>
              <div class="body">
                <div class="more"><span class="help">?</span>More information</div>
                <form @submit=${(e: Event) => e.preventDefault()}>
                  <div class="field type">
                    <label for="type">Type:</label>
                    <div class="select"><select id="type"><option>Week</option></select>${this.arrow()}</div>
                  </div>
                  <div class="field domain">
                    <label for="domain">Domain:</label>
                    <div class="select">
                      <select id="domain"><option></option></select>
                      <masked-value .rows=${DOMAIN_MASK}></masked-value>${this.arrow()}
                    </div>
                  </div>
                  <button class="primary filter">
                    <svg width="17" height="16" viewBox="0 0 17 16" aria-hidden="true"><path d="M0 0h17l-6 8v7.500L6.500 13V8z" fill="#4d8299"></path></svg>Filter
                  </button>
                </form>
                <geo-chart></geo-chart>
                <table>
                  <thead><tr><th scope="col">Value</th><th scope="col">Country</th><th scope="col">Count</th></tr></thead>
                  <tbody>
                    <tr class="top"><td colspan="3">Top 20 Value</td></tr>
                    ${ROWS.map((r) => html`
                      <tr><td><masked-value .rows=${r.mask}></masked-value></td><td>${r.country}</td><td>${r.count}</td></tr>`)}
                  </tbody>
                </table>
              </div>
            </section>
            <footer><a href="#toffstech">Toffstech</a> © 2023</footer>
          </main>
        </div>
      </div>
      <button class="chat" aria-label="Chat">
        <svg width="81" height="81" viewBox="0 0 81 81" aria-hidden="true">
          <circle cx="40.5" cy="40.5" r="40.5" fill="#04a84e"></circle>
          <path d="M40.500 20C51 20 59.500 28.500 59.500 39.500 59.500 51 48 56.500 34.500 61.500V57C26.500 54 21.500 47.500 21.500 39.500 21.500 28.500 30 20 40.500 20z" fill="#fff"></path>
          <path d="M39 47q7 2 14 0c-.5 3.500-3 5-7 5s-6.500-2-7-5z" fill="#04a84e"></path>
        </svg>
      </button>
    `;
  }

  private arrow() {
    return html`<svg width="52" height="30" viewBox="0 0 52 30" aria-hidden="true" fill="none" stroke="#ccc">
      <path d="M1.500 1v28"></path><path d="M19 12l7 7 7-7" stroke-width="2.6"></path></svg>`;
  }

  private logo() {
    return html`<svg width="140" height="68" viewBox="0 0 140 68" role="img" aria-label="TOFFS">
      <defs><radialGradient id="orb"><stop offset="0" stop-color="#00aeef"></stop><stop offset=".55" stop-color="#0593d3"></stop><stop offset="1" stop-color="#043e75"></stop></radialGradient></defs>
      <text class="logo" y="59" x="-1">T</text>
      <text class="logo" y="59" x="77">FFS</text>
      <g fill="none">
        <path d="M33.500 22C18 39 26 65 50 65s32-26 16.500-43" stroke="#0c2c64" stroke-width="5.5"></path>
        <path d="M36 22Q50 8 64 22" stroke="#00aeef" stroke-width="5"></path>
        <path d="M28 11Q50-6 72 11" stroke="#00aeef" stroke-width="5.5"></path>
      </g>
      <circle cx="50" cy="40" r="20.5" fill="url(#orb)"></circle>
      <path d="M39 28q11-9 22 0q-11-5-22 0z" fill="#d8f0fb"></path>
    </svg>`;
  }
}
